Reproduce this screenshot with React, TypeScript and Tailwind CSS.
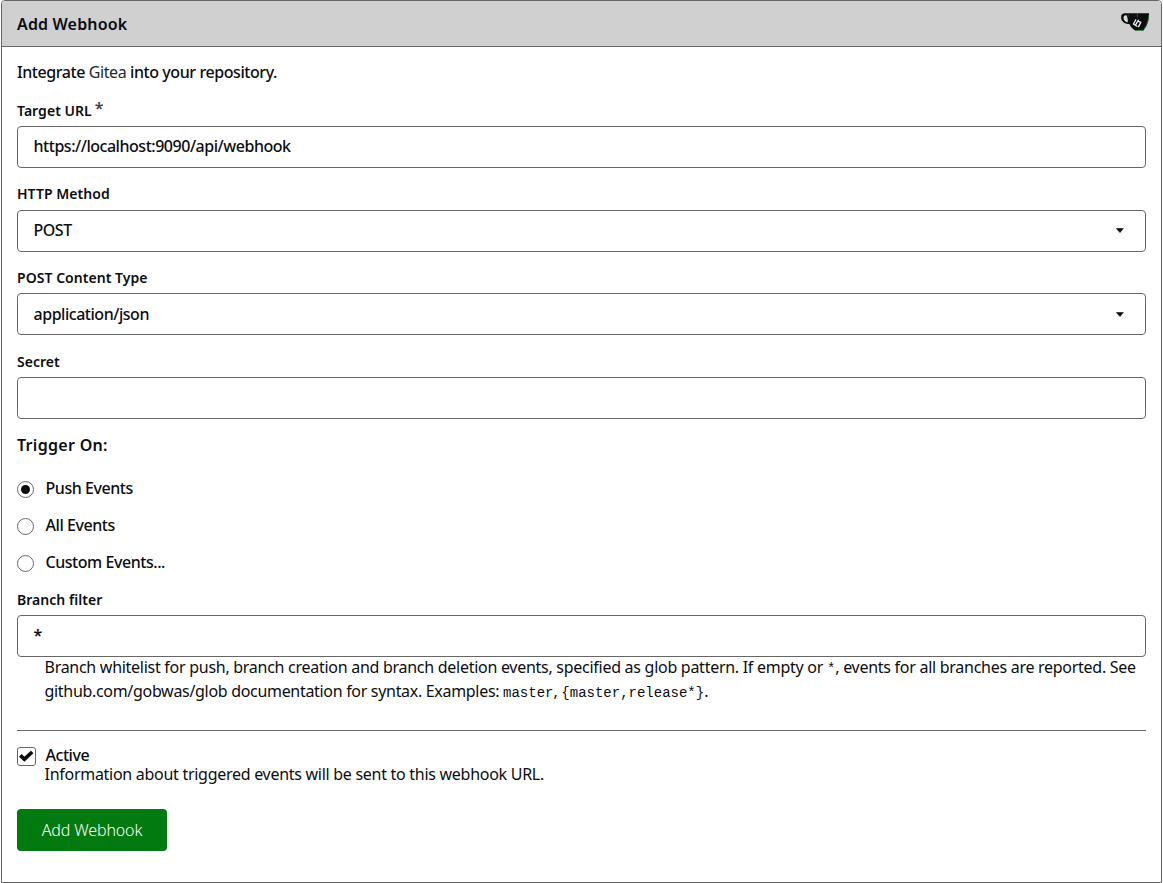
import React from "react";

function Label({ children, className = "" }: { children: React.ReactNode; className?: string }) {
  return <label className={`block text-[14px] leading-5 font-semibold tracking-[0.04px] whitespace-nowrap ${className}`}>{children}</label>;
}

function Field({ children, className = "" }: { children?: React.ReactNode; className?: string }) {
  return (
    <div className={`flex h-[42px] items-center justify-between rounded-[4px] border border-[#676767] pr-4 pl-[15.5px] leading-5 font-medium tracking-[-0.47px] whitespace-nowrap ${className}`}>
      {children}
    </div>
  );
}

function Caret() {
  return (
    <svg className="mr-[5px] h-[5px] w-2" viewBox="0 0 8 5">
      <path d="M0.3 0.5h7L4 4.6z" fill="#0b0d10" stroke="#0b0d10" strokeWidth="0.6" strokeLinejoin="round" />
    </svg>
  );
}

function Radio({ text, checked = false }: { text: string; checked?: boolean }) {
  return (
    <label className="flex h-[37px] items-center gap-[11.5px] font-medium tracking-[-0.45px]">
      <span className="mt-px flex size-[17px] items-center justify-center rounded-full border border-[#676767]">
        {checked && <span className="size-[9px] rounded-full bg-[#0b0d10]" />}
      </span>
      <span className="-mt-0.5 leading-5">{text}</span>
    </label>
  );
}

function Code({ children }: { children: React.ReactNode }) {
  return <code className="font-['Liberation_Mono',monospace] text-[14px] leading-none tracking-normal">{children}</code>;
}

function GiteaLogo() {
  return (
    <svg className="h-[20px] w-[30px]" viewBox="0 0 30 20">
      <path d="M5 1.2H29C29 8 27.6 13.6 23.4 18.4H15C12.4 16.8 10.2 14.6 9.4 12C4 12 1.1 9 1.1 5.2C1.1 2.8 2.4 1.2 5 1.2Z" fill="#0b0d10" />
      <path d="M6.6 3.4C4.6 2.9 3.4 4.2 3.5 6C3.7 8 5 9.7 7.6 10.4C8.2 8.2 7.6 5.4 6.6 3.4Z" fill="#d5ddd3" />
      <path d="M17.3 1.5v4M28.7 3c-.2 4.8-1.5 9.5-5 14M15.5 18.5h7M8.2 2.4v2.4" fill="none" stroke="#138d22" strokeWidth="0.7" />
      <g fill="none" stroke="#f4f4f4" strokeWidth="1.3" strokeLinecap="round">
        <path d="M15.8 7.8L13.5 12L17 14.2M18.3 8.2L15.9 12.4M18 9.2L20.8 10.4L18.6 14.6" />
      </g>
    </svg>
  );
}

export default function App() {
  return (
    <main className="h-[883px] w-[1163px] bg-white pr-px pl-px font-['Noto_Sans',sans-serif] text-[16px] text-[#0b0d10]">
      <div className="flex h-[883px] flex-col rounded-t-[4px] border border-[#676767]">
        <header className="flex h-[46px] shrink-0 items-center justify-between rounded-t-[3px] border-b border-[#676767] bg-[#d0d0d0] pr-[11px] pl-[15px]">
          <h4 className="text-[16px] leading-6 font-semibold tracking-[0.15px]">Add Webhook</h4>
          <div className="-mt-1"><GiteaLogo /></div>
        </header>
        <div className="flex flex-col px-[15px]">
          <p className="mt-[15px] h-5 leading-5 font-medium tracking-[-0.42px]">
            Integrate <span className="font-normal text-[#25282c]">Gitea</span> into your repository.
          </p>
          <Label className="mt-[19px] h-5">
            Target URL<span className="relative -top-0.5 ml-[3px] text-[16px] leading-none font-semibold text-[#3f4247]">*</span>
          </Label>
          <Field className="mt-[5px] pb-0.5">https://localhost:9090/api/webhook</Field>
          <Label className="mt-[16px] h-5">HTTP Method</Label>
          <Field className="mt-[6px] pb-0.5">POST<Caret /></Field>
          <Label className="mt-[16px] h-5">POST Content Type</Label>
          <Field className="mt-[5px]">application/json<Caret /></Field>
          <Label className="mt-[17px] h-5">Secret</Label>
          <Field className="mt-[5px]" />
          <h4 className="mt-[16px] h-5 text-[16px] leading-5 font-semibold tracking-[0.3px]">Trigger On:</h4>
          <div className="mt-[15px] flex flex-col">
            <Radio text="Push Events" checked />
            <Radio text="All Events" />
            <Radio text="Custom Events..." />
          </div>
          <Label className="mt-[9px] h-5">Branch filter</Label>
          <Field className="mt-[5px] pb-0.5 font-semibold">*</Field>
          <p className="-mt-0.5 h-12 pl-[27.5px] leading-6 whitespace-nowrap">
            <span className="tracking-[-0.275px]">
              Branch whitelist for push, branch creation and branch deletion events, specified as glob pattern. If empty or{" "}
              <Code>*</Code>, events for all branches are reported. See
            </span>
            <br />
            <span className="tracking-[-0.31px]">
              github.com/gobwas/glob documentation for syntax. Examples: <Code>master</Code>,{" "}
              <Code>{"{master,release*}"}</Code>.
            </span>
          </p>
          <hr className="mt-[27px] border-[#676767]" />
          <div className="mt-[15px] flex h-[19px] gap-[9.5px]">
            <span className="mt-px flex size-[19px] shrink-0 items-center justify-center rounded-[3px] border border-[#676767]">
              <svg className="-mt-px h-[12px] w-[15px]" viewBox="0 0 15 12">
                <path d="M1.3 5.4L5.4 9.2L13.2 2" fill="none" stroke="#0b0d10" strokeWidth="3.7" />
              </svg>
            </span>
            <span className="h-[18px] leading-[18px] font-medium tracking-[-0.45px]">Active</span>
          </div>
          <p className="h-[19px] pl-[27.5px] leading-[18px] tracking-[-0.28px]">Information about triggered events will be sent to this webhook URL.</p>
          <button className="mt-[25px] flex h-[42px] w-[150px] items-center justify-center rounded-[4px] bg-[#027a10] font-light tracking-[-0.13px] text-white">
            Add Webhook
          </button>
        </div>
      </div>
    </main>
  );
}
